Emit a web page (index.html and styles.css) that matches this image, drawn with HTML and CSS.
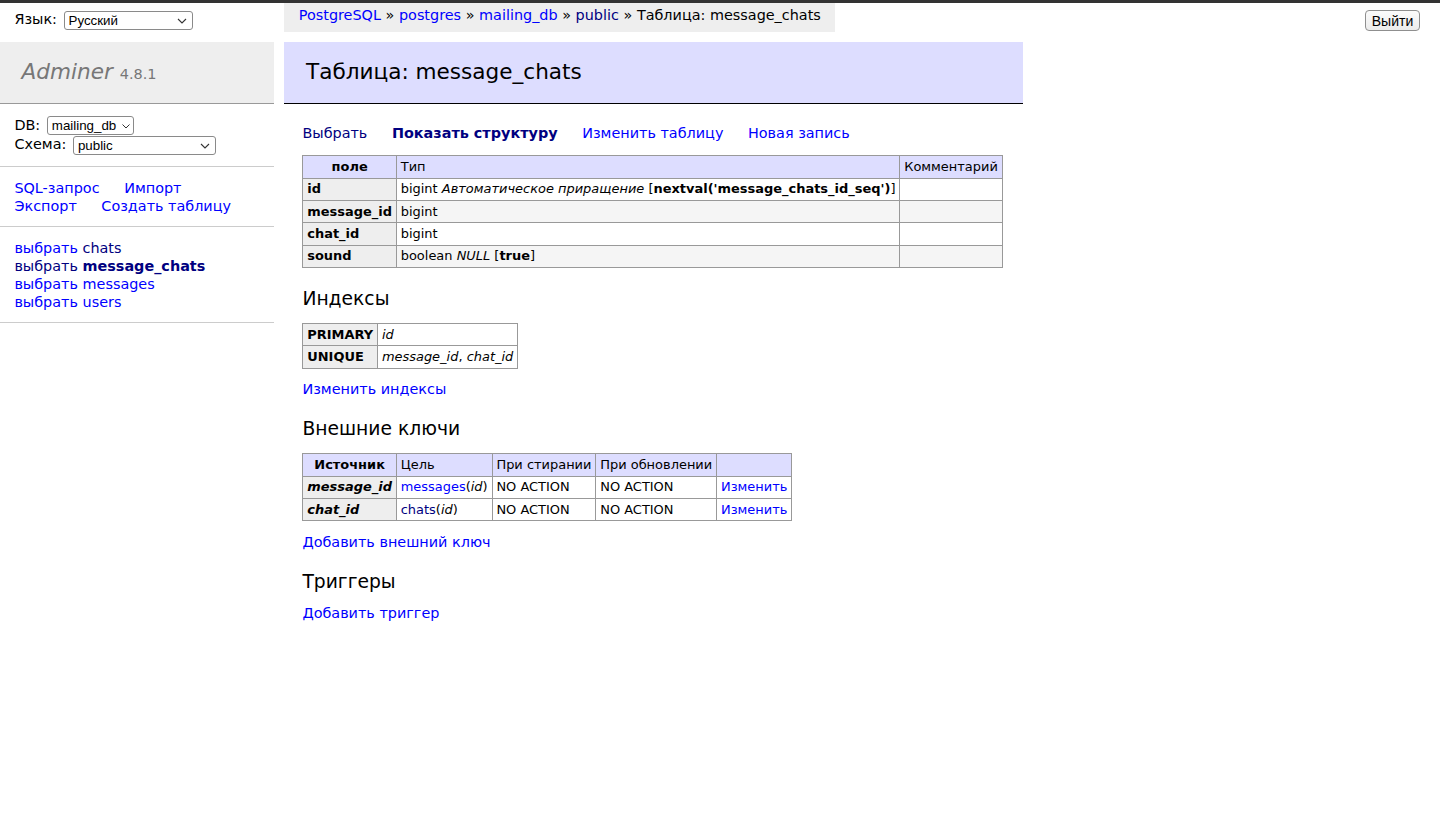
FILE: index.html
```html
<!DOCTYPE html>
<html lang="ru">
<head>
<meta charset="utf-8">
<title>Таблица: message_chats - Adminer</title>
<link rel="stylesheet" href="styles.css">
</head>
<body>
<div class="topbar"></div>
<div class="header">
  <div class="lang">Язык: <span class="selwrap"><select class="sel-lang"><option>Русский</option></select><svg class="chev" width="10" height="6" viewBox="0 0 10 6"><path d="M1 1l4 4 4-4" fill="none" stroke="#333" stroke-width="1.1"/></svg></span></div>
  <div class="breadcrumb"><a href="#">PostgreSQL</a> » <a href="#">postgres</a> » <a href="#">mailing_db</a> » <a href="#" class="v">public</a> » Таблица: message_chats</div>
  <div class="spacer"></div>
  <div class="logout"><button type="button" class="btn">Выйти</button></div>
</div>
<div class="main">
  <div class="menu">
    <h1><a href="#" class="brand">Adminer</a> <span class="version">4.8.1</span></h1>
    <p class="dbs">DB: <span class="selwrap"><select class="sel-db"><option>mailing_db</option></select><svg class="chev chev-db" width="10" height="6" viewBox="0 0 10 6"><path d="M1.5 1.5l3.5 3.5 3.5-3.5" fill="none" stroke="#333" stroke-width="1"/></svg></span><br>Схема: <span class="selwrap"><select class="sel-schema"><option>public</option></select><svg class="chev" width="10" height="6" viewBox="0 0 10 6"><path d="M1 1l4 4 4-4" fill="none" stroke="#333" stroke-width="1.1"/></svg></span></p>
    <p class="links side-links"><a href="#">SQL-запрос</a> <a href="#">Импорт</a> <a href="#">Экспорт</a> <a href="#">Создать таблицу</a></p>
    <ul class="tables">
      <li><a href="#">выбрать</a> <a href="#" class="v">chats</a></li>
      <li><a href="#" class="v">выбрать</a> <a href="#" class="v active">message_chats</a></li>
      <li><a href="#">выбрать</a> <a href="#">messages</a></li>
      <li><a href="#">выбрать</a> <a href="#">users</a></li>
    </ul>
  </div>
  <div class="content">
    <h2>Таблица: message_chats</h2>
    <p class="links"><a href="#" class="v">Выбрать</a> <a href="#" class="v active">Показать структуру</a> <a href="#">Изменить таблицу</a> <a href="#">Новая запись</a></p>
    <table class="odds">
      <thead><tr><th>поле</th><td>Тип</td><td>Комментарий</td></tr></thead>
      <tbody>
        <tr><th>id</th><td>bigint <i>Автоматическое приращение</i> [<b>nextval('message_chats_id_seq')</b>]</td><td></td></tr>
        <tr><th>message_id</th><td>bigint</td><td></td></tr>
        <tr><th>chat_id</th><td>bigint</td><td></td></tr>
        <tr><th>sound</th><td>boolean <i>NULL</i> [<b>true</b>]</td><td></td></tr>
      </tbody>
    </table>
    <h3>Индексы</h3>
    <table>
      <tbody>
        <tr><th>PRIMARY</th><td><i>id</i></td></tr>
        <tr><th>UNIQUE</th><td><i>message_id</i>, <i>chat_id</i></td></tr>
      </tbody>
    </table>
    <p class="links"><a href="#">Изменить индексы</a></p>
    <h3>Внешние ключи</h3>
    <table>
      <thead><tr><th>Источник</th><td>Цель</td><td>При стирании</td><td>При обновлении</td><td>&nbsp;</td></tr></thead>
      <tbody>
        <tr><th><i>message_id</i></th><td><a href="#">messages</a>(<i>id</i>)</td><td>NO ACTION</td><td>NO ACTION</td><td><a href="#">Изменить</a></td></tr>
        <tr><th><i>chat_id</i></th><td><a href="#" class="v">chats</a>(<i>id</i>)</td><td>NO ACTION</td><td>NO ACTION</td><td><a href="#">Изменить</a></td></tr>
      </tbody>
    </table>
    <p class="links"><a href="#">Добавить внешний ключ</a></p>
    <h3>Триггеры</h3>
    <p class="links"><a href="#">Добавить триггер</a></p>
  </div>
</div>
</body>
</html>
```
FILE: styles.css
```css
html, body {
  margin: 0;
  padding: 0;
}
body {
  color: #000;
  background: #fff;
  font: 14.4px/1.25 Verdana, "DejaVu Sans", sans-serif;
}
.topbar {
  height: 3px;
  background: #333;
}
a {
  color: #00f;
  text-decoration: none;
}
a.v {
  color: #000080;
}
.active {
  font-weight: bold;
}
.header {
  display: flex;
  align-items: flex-start;
  height: 2em;
}
.lang {
  box-sizing: border-box;
  width: calc(21em - 18px);
  flex: none;
  padding: .3em 1em;
  line-height: 1.8em;
  white-space: nowrap;
}
.lang .selwrap {
  margin-left: 2px;
}
.breadcrumb {
  white-space: nowrap;
  background: #eee;
  height: 2em;
  line-height: 1.8em;
  padding: 0 1em;
}
.spacer {
  flex: 1;
}
.logout {
  margin: .5em 20px 0 0;
}
.btn {
  font: 14px "Liberation Sans", Arial, sans-serif;
  height: 21px;
  width: 55px;
  padding: 0 4px;
  border: 1px solid #8f8f8f;
  border-radius: 4px;
  background: linear-gradient(#fbfbfb, #ececec);
  color: #000;
}
.selwrap {
  position: relative;
  display: inline-block;
  vertical-align: middle;
  line-height: 0;
}
.dbs .selwrap {
  margin-left: 2px;
}
select {
  -webkit-appearance: none;
  appearance: none;
  box-sizing: border-box;
  font: 13.33px "Liberation Sans", Arial, sans-serif;
  height: 19px;
  border: 1px solid #8a8a8a;
  border-radius: 3px;
  background: #fff;
  color: #000;
  padding: 0 18px 0 4px;
  margin: 0;
}
.chev {
  position: absolute;
  right: 6px;
  top: 7px;
  pointer-events: none;
}
.chev-db {
  right: 3px;
}
.sel-lang {
  width: 129px;
}
.sel-db {
  width: 87px;
  padding: 0 12px 0 4px;
}
.sel-schema {
  width: 143px;
}
.main {
  display: grid;
  grid-template-columns: 19em auto;
  justify-content: start;
  align-items: start;
  padding-top: 10px;
}
.menu h1 {
  font-size: 150%;
  margin: 0;
  padding: .8em 1em;
  border-bottom: 1px solid #999;
  font-weight: normal;
  color: #777;
  background: #eee;
}
.brand {
  color: #777;
  font-style: italic;
}
.version {
  color: #777;
  font-size: 67%;
}
.menu p, .menu ul {
  padding: .8em 1em;
  margin: 0;
  border-bottom: 1px solid #ccc;
}
.tables {
  list-style: none;
  white-space: nowrap;
}
.links a {
  white-space: nowrap;
  margin-right: 20px;
}
.content {
  margin-left: 2em;
  padding: 0 20px 20px 0;
}
h2 {
  font-size: 150%;
  margin: 0 0 20px -18px;
  padding: .8em 1em;
  border-bottom: 1px solid #000;
  color: #000;
  font-weight: normal;
  background: #ddf;
}
h3 {
  font-weight: normal;
  font-size: 130%;
  margin: 1em 0 0;
}
.content p {
  margin: .8em 20px 0 0;
}
table {
  margin: 1em 20px 0 0;
  border-collapse: collapse;
  font-size: 90%;
  white-space: nowrap;
}
td, th {
  border: 1px solid #999;
  padding: .2em .3em;
}
th {
  background: #eee;
  text-align: left;
}
thead th {
  text-align: center;
  padding: .2em .5em;
}
thead td, thead th {
  background: #ddf;
}
.odds tbody tr:nth-child(2n) {
  background: #f5f5f5;
}
```
